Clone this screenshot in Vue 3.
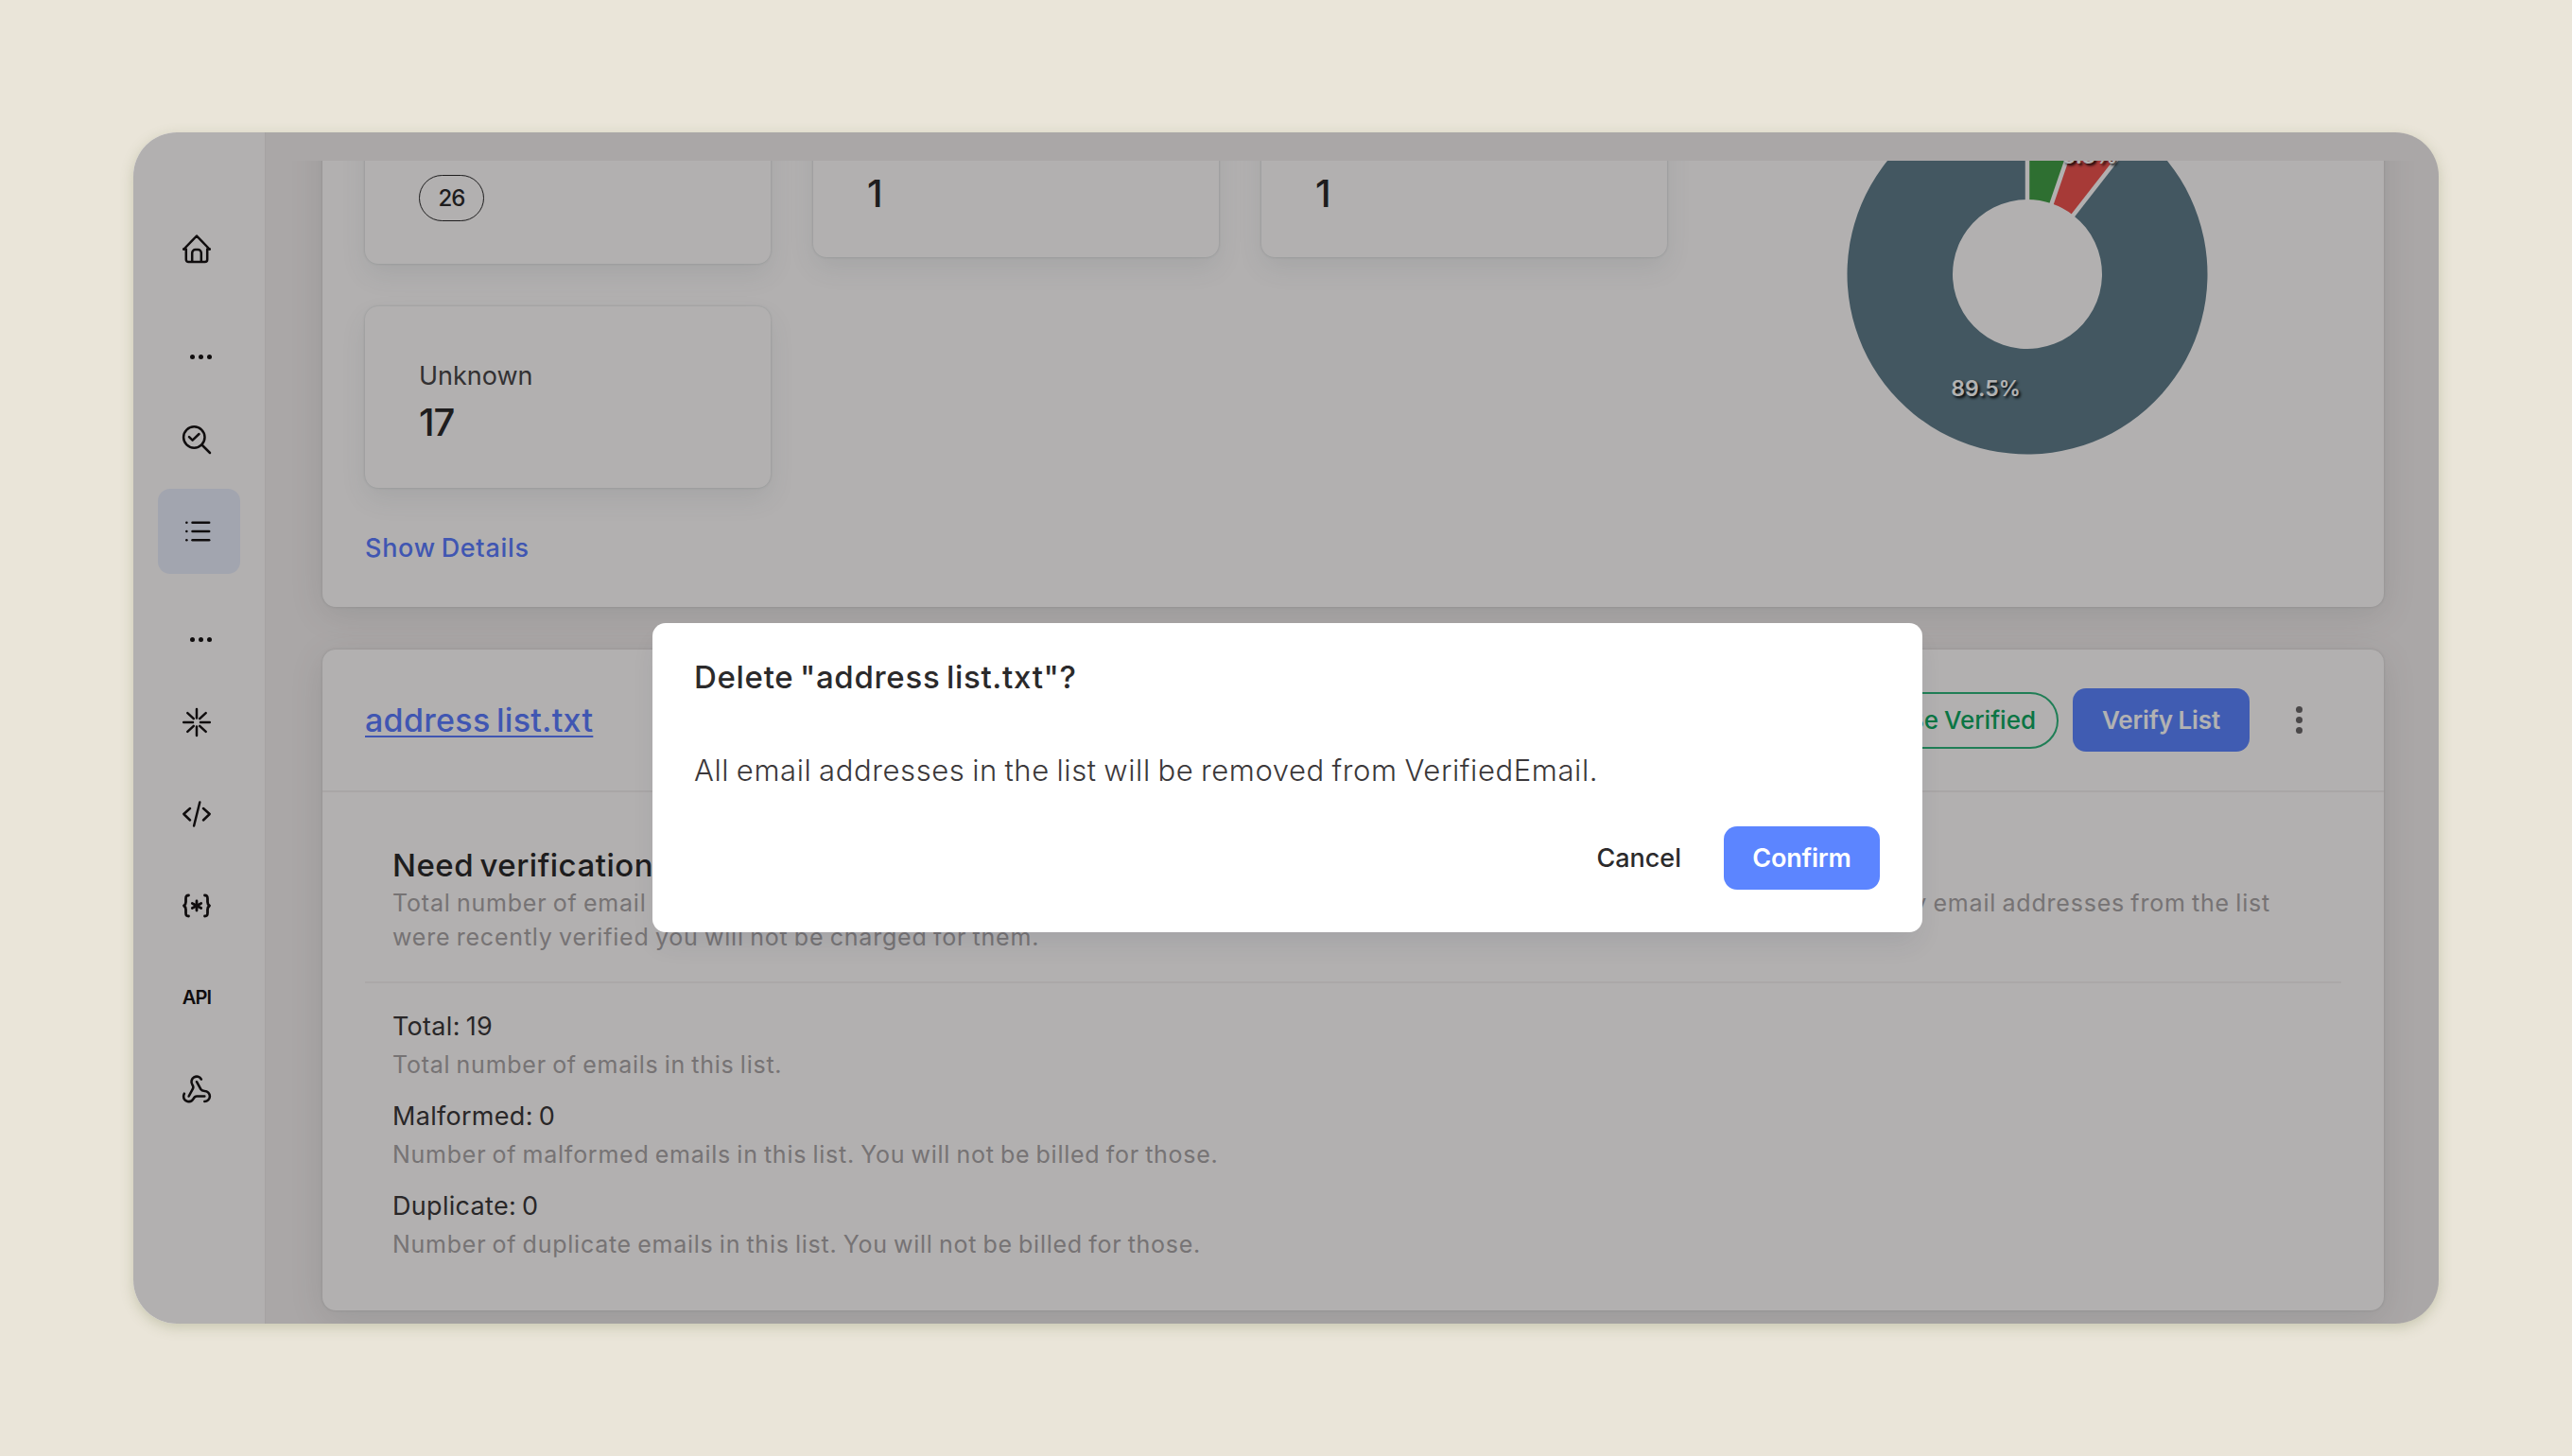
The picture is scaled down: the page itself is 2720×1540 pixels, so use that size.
<template>
  <div class="page">
    <div class="window">
      <!-- Sidebar -->
      <aside class="sidebar">
        <template v-for="item in menu" :key="item.id">
          <div v-if="item.type === 'group'" class="nav-group">
            <span></span><span></span><span></span>
          </div>
          <a v-else class="nav-item" :class="{ active: item.id === activeId }" @click="activeId = item.id">
            <span v-if="item.label" class="nav-label">{{ item.label }}</span>
            <svg v-else class="nav-icon" :viewBox="item.box || '0 0 30 30'" :stroke-width="item.stroke || 2.5">
              <path v-for="d in item.paths" :key="d" :d="d" />
            </svg>
          </a>
        </template>
      </aside>

      <main class="content">
        <div class="scroll-area">
          <!-- Verification results -->
          <section class="card results">
            <div class="results-left">
              <div class="tiles">
                <div class="tile top">
                  <div class="badge">26</div>
                </div>
                <div class="tile top short">
                  <div class="tile-value">1</div>
                </div>
                <div class="tile top short">
                  <div class="tile-value">1</div>
                </div>
                <div class="tile">
                  <div class="tile-label">Unknown</div>
                  <div class="tile-value">17</div>
                </div>
              </div>
              <a class="details-link">Show Details</a>
            </div>
            <div class="chart">
              <svg class="donut" viewBox="-191 -191 382 382">
                <path v-for="s in slices" :key="s.color" :d="s.path" :fill="s.color" />
                <line v-for="s in slices" :key="s.start" class="gap" :x1="s.x1" :y1="s.y1" :x2="s.x2" :y2="s.y2" />
                <text class="slice-label" x="-44" y="129">89.5%</text>
                <text class="slice-label" x="66" y="-117">5.3%</text>
              </svg>
            </div>
          </section>

          <!-- List -->
          <section class="card list">
            <header class="list-header">
              <a class="list-name">address list.txt</a>
              <div class="list-actions">
                <span class="pill">Can Be Verified</span>
                <button class="btn verify">Verify List</button>
                <button class="more"><i></i><i></i><i></i></button>
              </div>
            </header>
            <div class="list-body">
              <h3>Need verification</h3>
              <div class="hint">
                <div class="hint-line">
                  <span>Total number of email addresses in the list that need to be verified. You will be charged for every address.</span>
                  <span>If any email addresses from the list</span>
                </div>
                <div class="hint-line">were recently verified you will not be charged for them.</div>
              </div>
            </div>
            <div class="stats">
              <div v-for="stat in stats" :key="stat.name" class="stat">
                <div class="stat-name">{{ stat.name }}: {{ stat.value }}</div>
                <div class="stat-hint">{{ stat.hint }}</div>
              </div>
            </div>
          </section>
        </div>
      </main>

      <!-- Confirm dialog -->
      <div v-if="showDialog" class="overlay">
        <div class="dialog">
          <h2>Delete "address list.txt"?</h2>
          <p>All email addresses in the list will be removed from VerifiedEmail.</p>
          <div class="dialog-actions">
            <button class="btn cancel" @click="showDialog = false">Cancel</button>
            <button class="btn confirm" @click="showDialog = false">Confirm</button>
          </div>
        </div>
      </div>
    </div>
  </div>
</template>

<script setup>
import { ref, computed } from 'vue';

const showDialog = ref(true);
const activeId = ref('lists');

const menu = [
  {
    id: 'home',
    paths: [
      'M1.5 15.5 15 1.5l13.5 14',
      'M1.2 15.5H3.8V26.5a2.5 2.5 0 0 0 2.5 2.5h17.4a2.5 2.5 0 0 0 2.5-2.5V15.5h2.6',
      'M10.2 28.8V19.5a3.5 3.5 0 0 1 3.5-3.5h2.6a3.5 3.5 0 0 1 3.5 3.5v9.3'
    ]
  },
  { id: 'g1', type: 'group' },
  {
    id: 'search',
    paths: ['M23.5 12.5a11.2 11.2 0 1 1-22.4 0a11.2 11.2 0 1 1 22.4 0Z', 'M20.5 20.5 29 29', 'M7 12.2l3.6 3.4L17.5 9']
  },
  {
    id: 'lists',
    paths: ['M10.5 5.7H28.2', 'M10.5 15H28.2', 'M10.5 24.3H28.2', 'M4.3 5.7h.1', 'M4.3 15h.1', 'M4.3 24.3h.1']
  },
  { id: 'g2', type: 'group' },
  {
    id: 'integrations',
    paths: [
      'M1.2 15H11', 'M19 15h9.8', 'M15 1v9.5', 'M15 19.5V29',
      'M5.3 5.2l6.5 6', 'M24.7 5.2l-6.5 6', 'M5.3 24.8l6.5-6', 'M24.7 24.8l-6.5-6'
    ]
  },
  { id: 'code', paths: ['M8 9l-6.7 6L8 21.5', 'M22 9l6.7 6L22 21.5', 'M18.3 2.5l-6.2 25'] },
  {
    id: 'regex',
    stroke: 2.8,
    paths: [
      'M6.5 4C3.8 4 3.5 5 3.5 7.5v3.5c0 2-.5 3-2 4 1.5 1 2 2 2 4v3.5c0 2.5.3 3.5 3 3.5',
      'M23.5 4c2.7 0 3 1 3 3.5v3.5c0 2 .5 3 2 4-1.5 1-2 2-2 4v3.5c0 2.5-.3 3.5-3 3.5',
      'M15 10v10', 'M10.3 12.5l9.4 5', 'M10.3 17.5l9.4-5'
    ]
  },
  { id: 'api', label: 'API' },
  {
    id: 'webhooks',
    box: '1.2 .8 21.6 21.6',
    stroke: 1.85,
    paths: [
      'M18 16.98h-5.99c-1.1 0-1.95.94-2.48 1.9A4 4 0 0 1 2 17c.01-.7.2-1.4.57-2',
      'm6 17 3.13-5.78c.53-.97.1-2.18-.5-3.1a4 4 0 1 1 6.89-4.06',
      'm12 6 3.13 5.73C15.66 12.7 16.9 13 18 13a4 4 0 0 1 0 8'
    ]
  }
];

const stats = [
  { name: 'Total', value: 19, hint: 'Total number of emails in this list.' },
  { name: 'Malformed', value: 0, hint: 'Number of malformed emails in this list. You will not be billed for those.' },
  { name: 'Duplicate', value: 0, hint: 'Number of duplicate emails in this list. You will not be billed for those.' }
];

const results = [
  { count: 1, color: '#43a047' },
  { count: 1, color: '#ef5350' },
  { count: 17, color: '#607d8b' }
];

// Donut slices, clockwise from the top
const OUTER = 190.5;
const INNER = 79;
const point = (angle, r) => [r * Math.sin(angle), -r * Math.cos(angle)];

const slices = computed(() => {
  const total = results.reduce((sum, r) => sum + r.count, 0);
  let angle = 0;
  return results.map(({ count, color }) => {
    const start = angle;
    angle += (count / total) * Math.PI * 2;
    const large = angle - start > Math.PI ? 1 : 0;
    const [x1, y1] = point(start, INNER - 2);
    const [x2, y2] = point(start, OUTER + 1);
    const path = `M${point(start, OUTER)} A${OUTER} ${OUTER} 0 ${large} 1 ${point(angle, OUTER)} ` +
      `L${point(angle, INNER)} A${INNER} ${INNER} 0 ${large} 0 ${point(start, INNER)} Z`;
    return { start, color, path, x1, y1, x2, y2 };
  });
});
</script>

<style>
body {
  margin: 0;
  background: #eae5d9;
}
</style>

<style scoped>
* {
  box-sizing: border-box;
}

.page {
  width: 2720px;
  height: 1540px;
  padding: 140px 141px;
  background: #eae5d9;
  font-family: Inter, 'Open Sans', sans-serif;
  color: #2b2a2b;
  overflow: hidden;
}

.window {
  position: relative;
  display: flex;
  width: 2438px;
  height: 1260px;
  border-radius: 46px;
  overflow: hidden;
  background: #f4efef;
  box-shadow: 0 4px 14px rgba(120, 130, 80, 0.3);
}

/* Sidebar */
.sidebar {
  flex: none;
  display: flex;
  flex-direction: column;
  align-items: center;
  width: 140px;
  padding-top: 78px;
  background: #fffcfc;
  border-right: 1px solid #eeeaea;
}

.nav-item {
  flex: none;
  display: flex;
  align-items: center;
  justify-content: center;
  width: 87px;
  height: 90px;
  padding-right: 5px;
  border-radius: 13px;
}

.nav-item + .nav-item {
  margin-top: 7px;
}

.nav-item.active {
  background: #e8edfb;
}

.nav-icon {
  width: 30px;
  height: 30px;
  overflow: visible;
  fill: none;
  stroke: #181415;
  stroke-linecap: round;
  stroke-linejoin: round;
}

.nav-label {
  font-size: 20px;
  font-weight: 600;
  letter-spacing: -0.9px;
  color: #181415;
}

.nav-group {
  flex: none;
  display: flex;
  align-items: center;
  gap: 4px;
  height: 112px;
  padding: 26px 0 0 3px;
}

.nav-group span {
  width: 5px;
  height: 5px;
  border-radius: 50%;
  background: #181415;
}

/* Content */
.content {
  flex: 1;
  min-width: 0;
  padding-top: 30px;
}

.scroll-area {
  height: 1230px;
  padding: 0 58px 0 60px;
  overflow: hidden;
}

.card {
  border-radius: 14px;
  background: #fffcfc;
  box-shadow: 0 0 3px rgba(40, 50, 50, 0.16), 0 8px 36px rgba(60, 70, 70, 0.12);
}

.results {
  display: flex;
  height: 605px;
  margin-top: -133px;
  padding: 45px 0 0 45px;
}

.results-left {
  width: 1380px;
}

.tiles {
  display: grid;
  grid-template-columns: repeat(3, 429px);
  gap: 45px;
  align-items: start;
}

.tile {
  height: 192px;
  padding: 52px 0 0 57px;
  border-radius: 14px;
  background: #fffcfc;
  box-shadow: 0 0 3px rgba(40, 70, 70, 0.2), 0 12px 28px rgba(60, 90, 100, 0.09);
}

.tile.top {
  height: 197px;
  padding-top: 96px;
}

.tile.short {
  height: 190px;
}

.tile-label {
  line-height: 44px;
  font-size: 27px;
  color: #4a4749;
}

.tile-value {
  line-height: 54px;
  font-size: 40px;
  font-weight: 500;
  letter-spacing: -1px;
}

.badge {
  display: flex;
  align-items: center;
  justify-content: center;
  width: 69px;
  height: 49px;
  margin-top: 7px;
  border: 1.5px solid #2b2a2b;
  border-radius: 25px;
  font-size: 24px;
  font-weight: 500;
  letter-spacing: -1px;
}

.details-link {
  display: block;
  margin-top: 42px;
  line-height: 44px;
  font-size: 27px;
  font-weight: 500;
  letter-spacing: 0.7px;
  word-spacing: -2px;
  color: #5c7cff;
}

.chart {
  flex: 1;
  display: flex;
  justify-content: center;
  padding-top: 17px;
}

.donut {
  width: 382px;
  height: 382px;
}

.gap {
  stroke: #fffcfc;
  stroke-width: 4.5;
}

.slice-label {
  font-size: 23px;
  font-weight: 600;
  text-anchor: middle;
  fill: #fff;
  text-shadow: 2px 2px 3px #000;
}

/* List card */
.list {
  height: 699px;
  margin-top: 45px;
}

.list-header {
  display: flex;
  align-items: center;
  justify-content: space-between;
  height: 151px;
  padding: 0 75px 0 45px;
  border-bottom: 2px solid #f2eeee;
}

.list-name {
  font-size: 34px;
  font-weight: 500;
  letter-spacing: 0.3px;
  word-spacing: -3px;
  color: #5c7cff;
  text-decoration: underline;
  text-decoration-thickness: 2px;
  text-underline-offset: 4px;
}

.list-actions {
  display: flex;
  align-items: center;
}

.pill {
  height: 60px;
  margin-right: 15px;
  padding: 0 22px;
  border: 2px solid #2fb57c;
  border-radius: 30px;
  line-height: 55px;
  font-size: 26px;
  font-weight: 500;
  word-spacing: -1px;
  color: #0fa862;
}

.btn {
  height: 67px;
  border: none;
  border-radius: 14px;
  font-family: inherit;
  font-size: 27px;
  cursor: pointer;
}

.verify,
.confirm {
  background: #5c85ff;
  color: #fff;
  font-weight: 600;
}

.verify {
  width: 187px;
  font-size: 26px;
  letter-spacing: -0.1px;
  word-spacing: -1px;
}

.more {
  display: flex;
  flex-direction: column;
  align-items: center;
  gap: 4px;
  width: 30px;
  margin-left: 37px;
  padding: 0;
  border: none;
  background: none;
}

.more i {
  width: 7px;
  height: 7px;
  border-radius: 50%;
  background: #6b6769;
}

.list-body {
  height: 202px;
  margin: 0 45px;
  padding: 55px 31px 0 29px;
  border-bottom: 2px solid #f5f1f1;
}

h3 {
  margin: 0;
  line-height: 44px;
  font-size: 33px;
  font-weight: 500;
  letter-spacing: 0.5px;
  word-spacing: -3px;
}

.hint {
  width: 1986px;
}

.hint-line {
  display: flex;
  justify-content: space-between;
  white-space: nowrap;
}

.hint-line,
.stat-hint {
  line-height: 36px;
  font-size: 25px;
  letter-spacing: 0.8px;
  word-spacing: -1.5px;
  color: #aaa5a7;
}

.stats {
  padding: 24px 75px 0 74px;
}

.stat {
  margin-bottom: 15px;
}

.stat-name {
  line-height: 44px;
  font-size: 27px;
  letter-spacing: 0.3px;
  word-spacing: -2px;
  color: #3b383a;
}

.stat-hint {
  letter-spacing: 0.75px;
  word-spacing: -1.5px;
}

/* Dialog */
.overlay {
  position: absolute;
  inset: 0;
  background: rgba(0, 0, 0, 0.3);
}

.dialog {
  position: absolute;
  top: 519px;
  left: 549px;
  width: 1343px;
  height: 327px;
  padding: 35px 45px 0 44px;
  border-radius: 14px;
  background: #fff;
  box-shadow: 0 16px 28px -6px rgba(40, 50, 80, 0.1);
}

.dialog h2 {
  margin: 0;
  line-height: 44px;
  font-size: 33px;
  font-weight: 500;
  letter-spacing: 0.7px;
  word-spacing: -3px;
}

.dialog p {
  margin: 53px 0 0;
  line-height: 48px;
  font-size: 31px;
  font-weight: 300;
  letter-spacing: 0.6px;
  word-spacing: -1.6px;
  color: #3b383a;
}

.dialog-actions {
  display: flex;
  justify-content: flex-end;
  gap: 15px;
  margin-top: 35px;
}

.cancel {
  padding: 0 30px;
  background: none;
  color: #2b2a2b;
  font-weight: 500;
}

.confirm {
  width: 165px;
  letter-spacing: -0.2px;
}
</style>
